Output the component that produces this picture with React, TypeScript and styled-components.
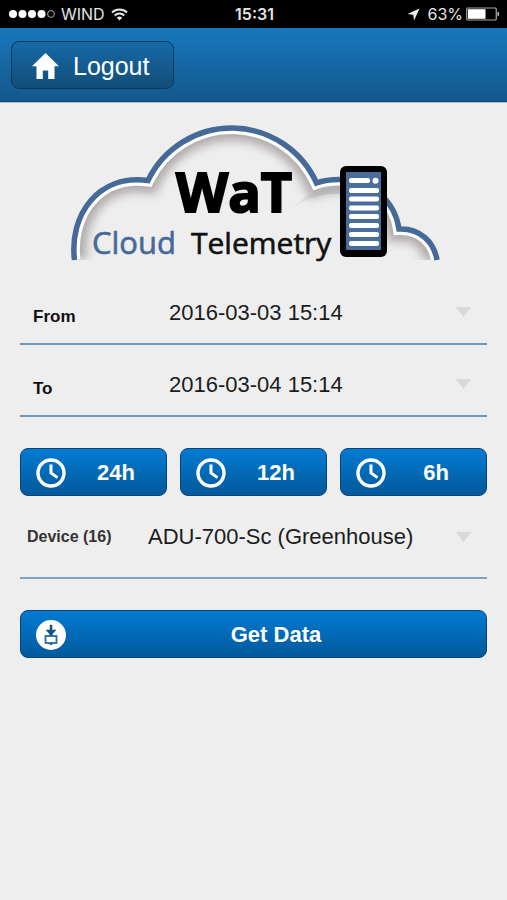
import React from "react";
import styled, { createGlobalStyle } from "styled-components";

const GlobalStyle = createGlobalStyle`
  *, *::before, *::after { box-sizing: border-box; }
  html, body { margin: 0; min-height: 100%; background: #eeeeee; }
  body { font-family: "Liberation Sans", Arial, Helvetica, sans-serif; color: #1c1c1c; }
  button, select { font: inherit; }
`;

const StatusBar = styled.div`
  display: grid;
  grid-template-columns: 1fr auto 1fr;
  align-items: center;
  height: 28px;
  padding: 0 7px 0 9px;
  background: #000;
  color: #e4e4e4;
  font-family: Inter, sans-serif;
  font-size: 16px;
  line-height: 28px;
`;

const StatusGroup = styled.div<{ $end?: boolean }>`
  display: flex;
  align-items: center;
  justify-content: ${(p) => (p.$end ? "flex-end" : "flex-start")};
  gap: ${(p) => (p.$end ? "3px" : "6px")};
`;

const Percent = styled.span`
  margin-left: 4px;
`;

const Clock = styled.time`
  font-weight: 600;
`;

const Header = styled.header`
  display: flex;
  align-items: center;
  height: 74px;
  padding: 0 11px;
  background: linear-gradient(#1877bd, #14588b);
  border-bottom: 1px solid #104a78;
  box-shadow: 0 1px 0 #a9c4d8;
`;

const LogoutButton = styled.button`
  display: flex;
  align-items: center;
  gap: 14px;
  height: 48px;
  padding: 3px 24px 0 20px;
  border: 1px solid #0a375c;
  border-radius: 8px;
  background: linear-gradient(#176aa8, #124d78);
  color: #fff;
  font-size: 25px;
  cursor: pointer;
`;

const Main = styled.main`
  padding: 18px 20px 31px;
`;

const Logo = styled.svg`
  display: block;
  width: 100%;
  max-width: 374px;
  margin: 0 auto 15px;
`;

const Field = styled.div<{ $tall?: boolean }>`
  display: grid;
  grid-template-columns: ${(p) => (p.$tall ? "128px" : "149px")} 1fr;
  align-items: center;
  height: ${(p) => (p.$tall ? "83px" : "64px")};
  border-bottom: 2px solid ${(p) => (p.$tall ? "#7ba3c3" : "#6d98ba")};

  & + & { margin-top: 8px; }
`;

const FieldLabel = styled.label<{ $compact?: boolean }>`
  padding: ${(p) => (p.$compact ? "0 0 0 7px" : "9px 0 0 13px")};
  font-size: ${(p) => (p.$compact ? "16px" : "17px")};
  font-weight: 700;
  color: ${(p) => (p.$compact ? "#333" : "#111")};
`;

const SelectWrap = styled.div`
  display: grid;
  align-items: center;

  & > * { grid-area: 1 / 1; }
`;

const Select = styled.select`
  appearance: none;
  width: 100%;
  height: 40px;
  padding: 0 40px 0 0;
  border: 0;
  border-radius: 0;
  background: transparent;
  color: #1c1c1c;
  font-size: 22px;
  cursor: pointer;
`;

const Caret = styled.svg`
  justify-self: end;
  margin-right: 16px;
  pointer-events: none;
`;

const RangeButtons = styled.div`
  display: grid;
  grid-template-columns: repeat(3, 1fr);
  gap: 13px;
  margin-top: 31px;
`;

const ActionButton = styled.button<{ $spaced?: boolean }>`
  display: flex;
  align-items: center;
  width: 100%;
  height: 48px;
  margin-top: ${(p) => (p.$spaced ? "31px" : "0")};
  padding: 1px 0 0 15px;
  border: 1px solid #0b4373;
  border-radius: 8px;
  background: linear-gradient(#037bd3, #02599b);
  color: #fff;
  font-size: 22px;
  font-weight: 700;
  cursor: pointer;
`;

const ActionText = styled.span`
  flex: 1;
  text-align: center;
`;

function SignalIcon() {
  return (
    <svg width="46" height="10" viewBox="0 0 46 10" aria-hidden="true">
      {[4, 13.5, 23, 32.5].map((x) => (
        <circle key={x} cx={x} cy="5" r="4" fill="#fff" />
      ))}
      <circle cx="42" cy="5" r="3.4" fill="none" stroke="#aaa" strokeWidth="1" />
    </svg>
  );
}

function WifiIcon() {
  return (
    <svg width="17" height="13" viewBox="0 0 17 13" fill="none" stroke="#e8e8e8" strokeWidth="2" aria-hidden="true">
      <path d="M1 4.500a11 11 0 0 1 15 0M3.700 7.500a7 7 0 0 1 9.600 0" />
      <path d="M8.500 12.500 5.800 9.800a4 4 0 0 1 5.400 0z" fill="#e8e8e8" stroke="none" />
    </svg>
  );
}

function LocationIcon() {
  return (
    <svg width="13" height="13" viewBox="0 0 13 13" aria-hidden="true">
      <path d="M12.500.500 7 12.500 6.300 6.700.500 6z" fill="#f0f0f0" />
    </svg>
  );
}

function BatteryIcon() {
  return (
    <svg width="34" height="14" viewBox="0 0 34 14" aria-hidden="true">
      <rect x=".75" y="1" width="29.500" height="12" rx="1" fill="none" stroke="#aaa" strokeWidth="1.200" />
      <rect x="2" y="2.200" width="17.500" height="9.600" fill="#fff" />
      <path d="M31.500 4.500c2.200.7 2.200 4.300 0 5z" fill="#ccc" />
    </svg>
  );
}

function HomeIcon() {
  return (
    <svg width="27" height="26" viewBox="0 0 27 26" aria-hidden="true">
      <path
        d="M13.500 0 27 13.200h-4.500V26h-6.300v-8.500h-5.400V26H4.500V13.200H0z"
        fill="#fff"
      />
    </svg>
  );
}

function ClockIcon() {
  return (
    <svg width="30" height="30" viewBox="0 0 30 30" fill="none" stroke="#fff" aria-hidden="true">
      <circle cx="15" cy="15" r="13" strokeWidth="3.400" />
      <path d="M15 6.500V15l6.500 4.600" strokeWidth="3" />
    </svg>
  );
}

function DownloadIcon() {
  return (
    <svg width="30" height="30" viewBox="0 0 30 30" aria-hidden="true">
      <circle cx="15" cy="15" r="15" fill="#fff" />
      <path d="M14 5h2v5h4L15 15.500 10 10h4z" fill="#10538c" stroke="#10538c" strokeWidth=".5" />
      <rect x="9.500" y="16" width="11" height="7" fill="none" stroke="#2a6ca3" strokeWidth="1.800" />
      <path d="M13 14h4l-2 2.500zM12.500 23.500h5l-2.500 1.800z" fill="#10538c" />
    </svg>
  );
}

const CLOUD =
  "M74.500 260C69 215 98 174 148 180.500A93 93 0 0 1 316.500 183Q327 179 343 179.500A58 58 0 0 1 399 229C420 228 434 242 437 260";
const SERVER_ROWS = [188, 196.500, 205.500, 214, 223, 232, 241];

function BrandLogo() {
  return (
    <Logo viewBox="67 120 374 146" role="img" aria-label="WaT Cloud Telemetry">
      <defs>
        <clipPath id="cloud-body">
          <path d={`${CLOUD}Z`} />
        </clipPath>
        <filter id="cloud-soft" x="-20%" y="-20%" width="140%" height="140%">
          <feGaussianBlur stdDeviation="5" />
        </filter>
        <linearGradient id="cloud-tail" x1="288" x2="330" y1="0" y2="0" gradientUnits="userSpaceOnUse">
          <stop offset="0" stopColor="#aaa" stopOpacity="0" />
          <stop offset="1" stopColor="#aaa" stopOpacity="0.5" />
        </linearGradient>
      </defs>
      <g clipPath="url(#cloud-body)">
        <path d={CLOUD} fill="none" stroke="#8d8785" strokeWidth="25" opacity="0.65" filter="url(#cloud-soft)" />
        <path d="M290 211Q308 188 342 187L342 194Q312 192 290 211" fill="url(#cloud-tail)" />
        <path d={CLOUD} fill="none" stroke="#fff" strokeWidth="12" />
      </g>
      <path d={CLOUD} fill="none" stroke="#466a98" strokeWidth="5.500" />
      <text
        x="176"
        y="212"
        fontFamily="'Open Sans', 'Noto Sans', sans-serif"
        fontSize="54"
        fontWeight="700"
        fill="#000"
        stroke="#000"
        strokeWidth="2"
      >
        WaT
      </text>
      <text x="92" y="254" fontFamily="'Open Sans', 'Noto Sans', sans-serif" fontSize="31" fill="#466a98" stroke="#466a98" strokeWidth=".6">
        Cloud
      </text>
      <text x="191" y="254" fontFamily="'Open Sans', 'Noto Sans', sans-serif" fontSize="30" fill="#111" stroke="#111" strokeWidth=".6">
        Telemetry
      </text>
      <rect x="340" y="166" width="47" height="91" rx="6" fill="#000" />
      <rect x="346" y="172" width="35" height="78" fill="#4a6d9c" />
      <rect x="349" y="178" width="21" height="5" rx="2" fill="#fff" />
      <circle cx="375.500" cy="180.700" r="3" fill="#fff" />
      {SERVER_ROWS.map((y) => (
        <rect key={y} x="349" y={y} width="30" height="5" rx="2" fill="#fff" />
      ))}
    </Logo>
  );
}

interface PickerProps {
  id: string;
  label: string;
  value: string;
  tall?: boolean;
}

function Picker({ id, label, value, tall }: PickerProps) {
  return (
    <Field $tall={tall}>
      <FieldLabel htmlFor={id} $compact={tall}>
        {label}
      </FieldLabel>
      <SelectWrap>
        <Select id={id} defaultValue={value}>
          <option value={value}>{value}</option>
        </Select>
        <Caret width="15" height="10" viewBox="0 0 15 10" aria-hidden="true">
          <path d="M0 0h15L7.500 10z" fill="#d9d9d9" />
        </Caret>
      </SelectWrap>
    </Field>
  );
}

export default function App() {
  return (
    <>
      <GlobalStyle />
      <StatusBar>
        <StatusGroup>
          <SignalIcon />
          <span>WIND</span>
          <WifiIcon />
        </StatusGroup>
        <Clock>15:31</Clock>
        <StatusGroup $end>
          <LocationIcon />
          <Percent>63%</Percent>
          <BatteryIcon />
        </StatusGroup>
      </StatusBar>
      <Header>
        <LogoutButton type="button">
          <HomeIcon />
          Logout
        </LogoutButton>
      </Header>
      <Main>
        <BrandLogo />
        <Picker id="from" label="From" value="2016-03-03 15:14" />
        <Picker id="to" label="To" value="2016-03-04 15:14" />
        <RangeButtons>
          {["24h", "12h", "6h"].map((range) => (
            <ActionButton key={range} type="button">
              <ClockIcon />
              <ActionText>{range}</ActionText>
            </ActionButton>
          ))}
        </RangeButtons>
        <Picker id="device" label="Device (16)" value="ADU-700-Sc (Greenhouse)" tall />
        <ActionButton type="button" $spaced>
          <DownloadIcon />
          <ActionText>Get Data</ActionText>
        </ActionButton>
      </Main>
    </>
  );
}
